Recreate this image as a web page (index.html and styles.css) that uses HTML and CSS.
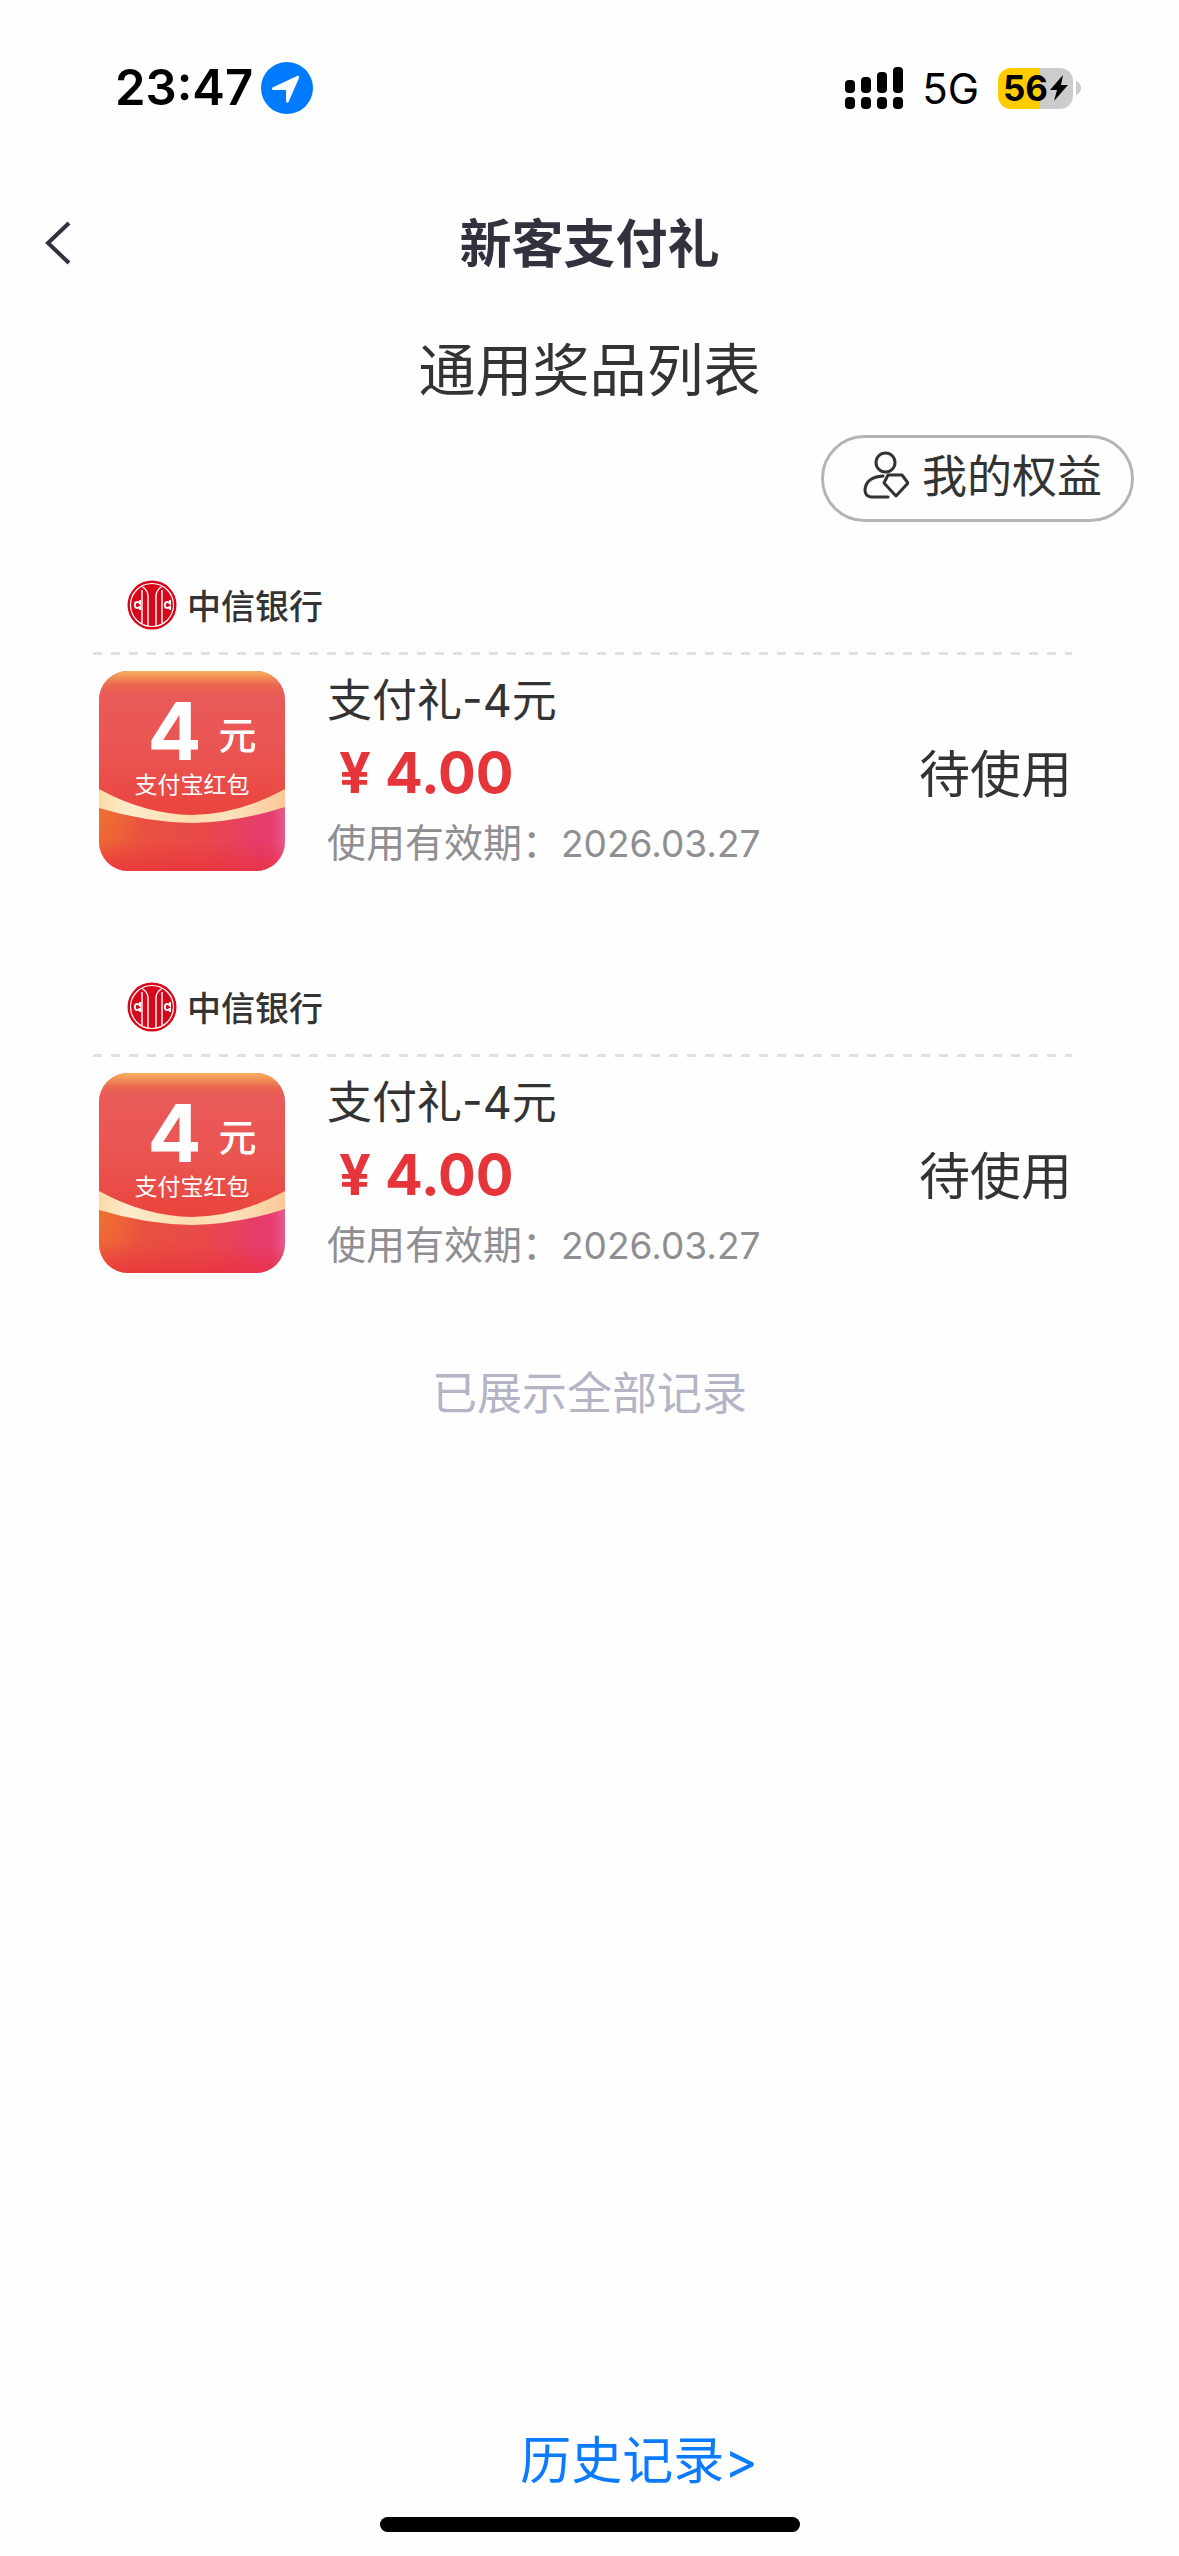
FILE: index.html
```html
<!DOCTYPE html>
<html lang="zh-CN">
<head>
<meta charset="utf-8">
<meta name="viewport" content="width=device-width, initial-scale=1">
<title>新客支付礼</title>
<link rel="stylesheet" href="styles.css">
</head>
<body>
<svg class="defs" aria-hidden="true">
  <defs>
    <linearGradient id="giftBase" x1="0" y1="0" x2="1" y2="0">
      <stop offset="0" stop-color="#ec5a3c"/><stop offset=".3" stop-color="#e94e42"/><stop offset=".55" stop-color="#e84a48"/><stop offset=".85" stop-color="#e63c6a"/><stop offset=".93" stop-color="#e63e72"/><stop offset="1" stop-color="#e85a8c"/>
    </linearGradient>
    <linearGradient id="giftFoot" x1="0" y1="0" x2="0" y2="1">
      <stop offset=".85" stop-color="#e9303a" stop-opacity="0"/><stop offset="1" stop-color="#e9303a" stop-opacity=".7"/>
    </linearGradient>
    <radialGradient id="giftGlow" cx="0" cy=".72" r=".25">
      <stop offset="0" stop-color="#f07a2c" stop-opacity=".7"/><stop offset="1" stop-color="#f07a2c" stop-opacity="0"/>
    </radialGradient>
    <linearGradient id="giftTop" x1="0" y1="0" x2="0" y2="1">
      <stop offset="0" stop-color="#f6b25c"/><stop offset=".05" stop-color="#f08a55"/><stop offset=".1" stop-color="#ea6450"/><stop offset=".18" stop-color="#e95a5a"/><stop offset=".6" stop-color="#ea5450"/><stop offset="1" stop-color="#ea433c"/>
    </linearGradient>
    <linearGradient id="giftBand" x1="0" y1="0" x2="1" y2="0">
      <stop offset="0" stop-color="#fbd9a4"/><stop offset=".15" stop-color="#fdeccb"/><stop offset=".5" stop-color="#fbdcae"/><stop offset=".7" stop-color="#fce2bd"/><stop offset="1" stop-color="#fac997"/>
    </linearGradient>
    <clipPath id="giftClip"><rect width="186" height="200" rx="29"/></clipPath>
    <symbol id="gift" viewBox="0 0 186 200">
      <g clip-path="url(#giftClip)">
        <rect width="186" height="200" fill="url(#giftBase)"/>
        <rect width="186" height="200" fill="url(#giftGlow)"/>
        <rect width="186" height="200" fill="url(#giftFoot)"/>
        <path d="M0 0H186V125Q140 144 93 146Q46 144 0 125Z" fill="url(#giftTop)"/>
        <path d="M0 118Q45 143 93 144Q141 143 186 118V136Q140 151 93 152Q46 151 0 137Z" fill="url(#giftBand)"/>
      </g>
    </symbol>
    <symbol id="citic" viewBox="0 0 50 50">
      <circle cx="25" cy="25" r="24.500" fill="#d7071b"/>
      <circle cx="25" cy="25" r="21.500" fill="none" stroke="#fff" stroke-width="1.200"/>
      <g fill="none" stroke="#fff" stroke-width="1.400">
        <path d="M15 6.500Q21 10 21 16V46M35 6.500Q29 10 29 16V46"/>
        <path d="M15 10V43M35 10V43"/>
      </g>
      <g fill="none" stroke="#fff" stroke-width="2">
        <path d="M13 20V23.500Q11 21 8.500 22.500Q7 25 8.500 27.500Q11 29 13 26.500V30"/>
        <path d="M43 20V23.500Q41 21 38.500 22.500Q37 25 38.500 27.500Q41 29 43 26.500V30"/>
      </g>
    </symbol>
  </defs>
</svg>

<div class="screen">
  <div class="status">
    <div class="status-side">
      <span class="time">23:47</span>
      <svg class="location" viewBox="0 0 52 52"><circle cx="26" cy="26" r="26" fill="#007aff"/><path d="M11.500 25.500 36 14Q39 13 38 16L27.500 40Q25.500 42 25 39V28H13Q9.500 27.500 11.500 25.500Z" fill="#fff"/></svg>
    </div>
    <div class="status-side">
      <svg class="signal" viewBox="0 0 58 42">
        <rect x="0" y="13" width="10" height="13" rx="4"/><rect x="16" y="10" width="10" height="16" rx="4"/><rect x="32" y="5" width="10" height="21" rx="4"/><rect x="48" y="0" width="10" height="26" rx="4"/>
        <rect x="0" y="30" width="10" height="12" rx="4"/><rect x="16" y="30" width="10" height="12" rx="4"/><rect x="32" y="30" width="10" height="12" rx="4"/><rect x="48" y="30" width="10" height="12" rx="4"/>
      </svg>
      <span class="network">5G</span>
      <div class="battery">
        <div class="battery-body">
          <span>56</span>
          <svg class="bolt" viewBox="0 0 18 26"><path d="M13 0 0 15H7L4 26 18 10H11Z"/></svg>
        </div>
        <svg class="battery-tip" viewBox="0 0 5 14"><path d="M0 0Q5 2 5 7T0 14Z" fill="#ccc"/></svg>
      </div>
    </div>
  </div>

  <header class="nav">
    <button class="back" type="button" aria-label="返回"><svg viewBox="0 0 26 44"><path d="M24 2 3 22 24 42" fill="none" stroke="#34313f" stroke-width="4"/></svg></button>
    <h1 class="nav-title">新客支付礼</h1>
  </header>

  <main class="content">
    <h2 class="heading">通用奖品列表</h2>
    <div class="actions">
      <button class="rights" type="button">
        <svg viewBox="0 0 46 48" fill="none" stroke="#333" stroke-width="3" stroke-linejoin="round" stroke-linecap="round"><circle cx="22.500" cy="11.500" r="9.500"/><path d="M20 25Q3 26 2 39Q2 45 8 46H25"/><path d="M25 24H39L45 32 33 45 21 32Z"/></svg>
        我的权益
      </button>
    </div>

    <ul class="list">
      <li class="card">
        <div class="bank"><svg><use href="#citic"/></svg>中信银行</div>
        <div class="row">
          <div class="gift">
            <svg class="gift-art"><use href="#gift"/></svg>
            <div class="gift-text"><p class="gift-amount"><b>4</b><span>元</span></p><p class="gift-name">支付宝红包</p></div>
          </div>
          <div class="info">
            <h3 class="name">支付礼-4元</h3>
            <p class="price"><span>¥</span>4.00</p>
            <p class="date">使用有效期：<time>2026.03.27</time></p>
          </div>
          <span class="state">待使用</span>
        </div>
      </li>
      <li class="card">
        <div class="bank"><svg><use href="#citic"/></svg>中信银行</div>
        <div class="row">
          <div class="gift">
            <svg class="gift-art"><use href="#gift"/></svg>
            <div class="gift-text"><p class="gift-amount"><b>4</b><span>元</span></p><p class="gift-name">支付宝红包</p></div>
          </div>
          <div class="info">
            <h3 class="name">支付礼-4元</h3>
            <p class="price"><span>¥</span>4.00</p>
            <p class="date">使用有效期：<time>2026.03.27</time></p>
          </div>
          <span class="state">待使用</span>
        </div>
      </li>
    </ul>
    <p class="end">已展示全部记录</p>
  </main>

  <footer class="footer">
    <a class="history" href="#history">历史记录&gt;</a>
    <div class="home"></div>
  </footer>
</div>
</body>
</html>
```

FILE: styles.css
```css
* { box-sizing: border-box; margin: 0; padding: 0; }
body { background: #fefefe; color: #333; font-family: Inter, "Noto Sans CJK SC", sans-serif; font-size: 45px; }
button { border: 0; background: none; font: inherit; color: inherit; }
svg { display: block; flex: none; }
.defs { position: absolute; width: 0; height: 0; }
.screen { min-height: 100vh; display: flex; flex-direction: column; }

.status { display: flex; justify-content: space-between; align-items: center; height: 176px; padding: 0 98px 0 115px; color: #000; }
.status-side { display: flex; align-items: center; }
.time { font-size: 49px; font-weight: 600; line-height: 60px; }
.location { width: 52px; height: 52px; margin-left: 8px; }
.signal { width: 58px; height: 42px; }
.network { margin: 0 19px; font-size: 42px; line-height: 52px; padding-top: 2px; }
.battery { display: flex; align-items: center; gap: 3px; }
.battery-body { display: flex; align-items: center; justify-content: center; gap: 2px; width: 75px; height: 41px; border-radius: 13px; background: linear-gradient(90deg, #ffcc00 42px, #ccc 42px); font-size: 35px; font-weight: 700; line-height: 40px; }
.bolt { width: 18px; height: 26px; }
.battery-tip { width: 5px; height: 14px; }

.nav { display: grid; grid-template-columns: 116px 1fr 116px; align-items: center; height: 136px; }
.back { display: flex; padding: 18px 0 20px 45px; }
.back svg { width: 26px; height: 44px; }
.nav-title { text-align: center; font-size: 52px; font-weight: 700; line-height: 72px; padding-top: 2px; color: #34313f; }

.content { flex: 1; }
.heading { text-align: center; font-size: 57px; font-weight: 400; line-height: 84px; padding: 17px 0 22px; }
.actions { display: flex; justify-content: flex-end; padding-right: 45px; }
.rights { display: flex; align-items: center; justify-content: center; gap: 13px; width: 313px; height: 87px; border: 3px solid #b4b4b4; border-radius: 44px; line-height: 64px; padding: 0 0 4px 10px; }
.rights svg { width: 46px; height: 48px; margin-bottom: 4px; }

.list { list-style: none; padding: 40px 107px 0 93px; }
.card { padding-bottom: 93px; }
.bank { display: flex; align-items: center; gap: 10px; height: 90px; padding: 0 0 4px 34px; font-family: "Noto Sans CJK SC", sans-serif; font-size: 34px; font-weight: 500; line-height: 50px; }
.bank svg { width: 50px; height: 50px; }
.row { display: flex; align-items: center; gap: 42px; padding: 19px 0 0 6px; background: repeating-linear-gradient(90deg, #dfdfe7 0 9px, transparent 9px 18px) 0 0 / 100% 3px no-repeat; }
.gift { display: grid; flex: none; width: 186px; }
.gift-art, .gift-text { grid-area: 1 / 1; }
.gift-art { width: 186px; height: 200px; }
.gift-text { z-index: 1; color: #fff; padding-top: 18px; }
.gift-amount { display: flex; align-items: center; justify-content: center; gap: 17px; padding-left: 20px; font-size: 38px; font-weight: 500; line-height: 84px; }
.gift-amount b { font-size: 80px; font-weight: 700; }
.gift-amount span { line-height: 56px; padding-top: 8px; }
.gift-name { text-align: center; font-size: 23px; line-height: 24px; }
.info { flex: 1; }
.name { font-size: 45px; font-weight: 400; line-height: 60px; }
.price { font-size: 56px; font-weight: 700; line-height: 84px; color: #e6353a; }
.price span { padding: 0 14px 0 12px; }
.date { font-size: 39px; line-height: 56px; color: #8e8e93; }
.date time { font-size: 37px; line-height: 40px; }
.state { font-size: 51px; line-height: 72px; padding-top: 8px; }
.end { text-align: center; line-height: 56px; color: #b4b4c6; }

.footer { display: flex; flex-direction: column; align-items: center; padding-bottom: 24px; }
.history { margin-left: 99px; font-size: 51px; line-height: 72px; color: #0a7aff; text-decoration: none; }
.home { width: 420px; height: 15px; margin-top: 20px; border-radius: 8px; background: #000; }
```
